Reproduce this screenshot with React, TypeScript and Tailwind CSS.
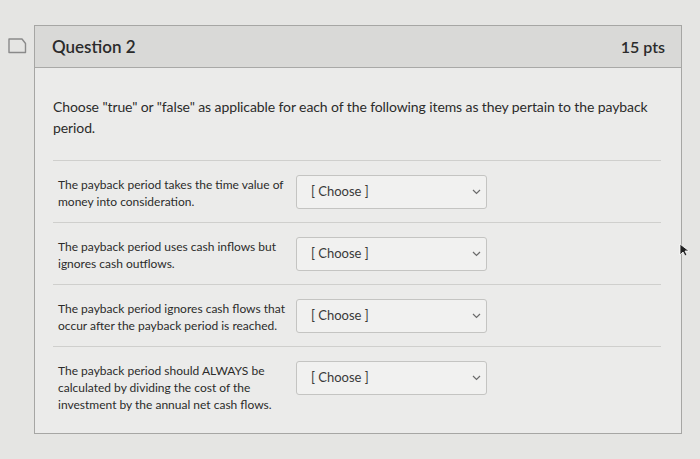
import React from "react";

const ITEMS = [
  ["The payback period takes the time value of", "money into consideration."],
  ["The payback period uses cash inflows but", "ignores cash outflows."],
  ["The payback period ignores cash flows that", "occur after the payback period is reached."],
  [
    "The payback period should ALWAYS be",
    "calculated by dividing the cost of the",
    "investment by the annual net cash flows.",
  ],
];

function Chevron() {
  return (
    <svg width="9" height="6" viewBox="0 0 9 6" fill="none" aria-hidden>
      <path d="M1 1l3.5 3.5L8 1" stroke="#6b6b6b" strokeWidth="1.2" />
    </svg>
  );
}

function SelectBox() {
  return (
    <div className="flex h-[34px] w-[191px] shrink-0 items-center justify-between rounded-[3px] border border-[#c4c4c2] bg-[#f1f1f0] pl-[14px] pr-[5px] text-[13px] text-[#3a3a3a]">
      <span>[ Choose ]</span>
      <Chevron />
    </div>
  );
}

export default function App() {
  return (
    <div
      className="relative h-[459px] w-[700px] overflow-hidden bg-[#e5e5e3] pt-[25px] text-[#2b2b2b]"
      style={{ fontFamily: "Lato, 'Open Sans', sans-serif" }}
    >
      {/* flag */}
      <svg className="absolute left-[8px] top-[38px]" width="19" height="16" viewBox="0 0 19 16" fill="none" aria-hidden>
        <path d="M1 1h13l3.5 4.5V14.5H1z" stroke="#8a8a8a" strokeWidth="1.4" strokeLinejoin="round" />
      </svg>

      <div className="ml-[34px] w-[648px] border border-[#a6a6a4] bg-[#ebebea]">
        <div className="flex h-[42px] items-center justify-between border-b border-[#a9a9a7] bg-[#d9d9d7] pl-[17px] pr-[16px]">
          <span className="text-[17px] font-semibold">Question 2</span>
          <span className="text-[16px] font-semibold">15 pts</span>
        </div>

        <div className="pb-[20px] pl-[18px] pr-[20px] pt-[28px]">
          <p className="text-[14px] leading-[21px] tracking-[-0.1px]">
            Choose "true" or "false" as applicable for each of the following items as they pertain to the payback
            period.
          </p>

          <div className="mt-[22px]">
            {ITEMS.map((lines, i) => (
              <div
                key={i}
                className="flex items-start gap-[6px] border-t border-[#cfcfcd] pb-[12px] pl-[5px] pt-[14px] last:pb-0"
              >
                <div className="w-[232px] whitespace-nowrap pt-[1px] text-[12px] leading-[17px]">
                  {lines.map((l, j) => (
                    <div key={j}>{l}</div>
                  ))}
                </div>
                <SelectBox />
              </div>
            ))}
          </div>
        </div>
      </div>

      {/* cursor */}
      <svg className="absolute left-[679px] top-[243px]" width="10" height="14" viewBox="0 0 10 14" aria-hidden>
        <path d="M1 1v11l3-3 2 4 2-1-2-4h4z" fill="#222" stroke="#fff" strokeWidth="0.8" />
      </svg>
    </div>
  );
}
